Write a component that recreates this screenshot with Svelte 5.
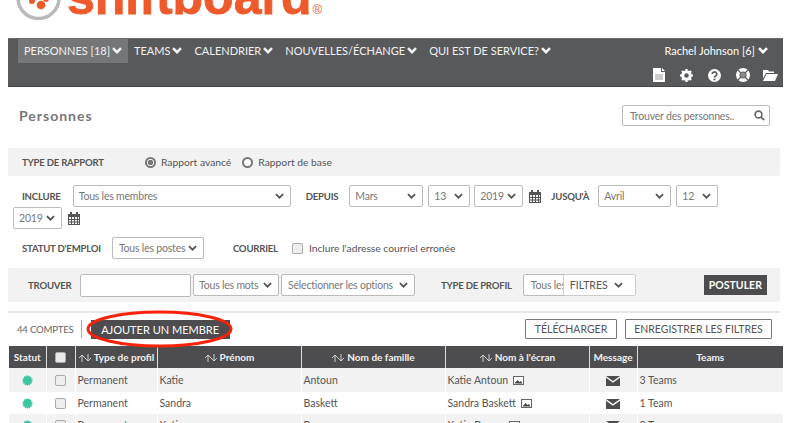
<script>
  const navItems = ['PERSONNES [18]', 'TEAMS', 'CALENDRIER', 'NOUVELLES/ÉCHANGE', 'QUI EST DE SERVICE?'];
  const rows = [
    ['Permanent', 'Katie', 'Antoun', 'Katie Antoun', '3 Teams'],
    ['Permanent', 'Sandra', 'Baskett', 'Sandra Baskett', '1 Team'],
    ['Permanent', 'Katie', 'Brown', 'Katie Brown', '2 Teams']
  ];
</script>

{#snippet chev(size = 9, w = 2.4)}
  <svg class="chev" width={size} height={size * 0.7} viewBox="0 0 10 7"><path d="M1 1.2 5 5.2 9 1.2" fill="none" stroke="currentColor" stroke-width={w}/></svg>
{/snippet}

{#snippet sel(text, cls)}
  <div class="sel {cls}"><span>{text}</span>{@render chev(9, 2)}</div>
{/snippet}

{#snippet cal()}
  <svg class="cal" width="12" height="13" viewBox="0 0 12 13"><path fill="#555" d="M2 0h2v2H2zM8 0h2v2H8zM0 2h12v11H0z"/><path fill="#f4f4f4" d="M1 5h2v2H1zM4 5h2v2H4zM7 5h2v2H7zM10 5h1v2h-1zM1 8h2v1.5H1zM4 8h2v1.5H4zM7 8h2v1.5H7zM10 8h1v1.5h-1zM1 10.5h2V12H1zM4 10.5h2V12H4zM7 10.5h2V12H7zM10 10.5h1V12h-1z"/></svg>
{/snippet}

{#snippet sort()}
  <svg class="sort" width="14" height="8" viewBox="0 0 14 8"><path d="M4 8V1M1 4l3-3 3 3M10 0v7M7 4l3 3 3-3" fill="none" stroke="#ddd" stroke-width=".9"/></svg>
{/snippet}

<div class="page">
  <header class="logo">
    <svg class="mark" width="46" height="22" viewBox="0 0 46 22">
      <circle cx="22.500" cy="-2" r="20.500" fill="none" stroke="#b9b9b9" stroke-width="3.500"/>
      <circle cx="16" cy="1" r="3" fill="#ee5a2c"/>
      <circle cx="25" cy="5" r="4.300" fill="#ee5a2c"/>
      <circle cx="30" cy="-1" r="3" fill="#ee5a2c"/>
    </svg>
    <span class="wordmark">shiftboard</span><span class="reg">®</span>
  </header>

  <nav class="nav">
    <div class="nav-row">
      {#each navItems as item, i}
        <div class="nav-item" class:active={i === 0}>{item}{@render chev(10, 2.6)}</div>
      {/each}
      <div class="user">Rachel Johnson [6]{@render chev(10, 2.6)}</div>
    </div>
    <div class="nav-icons">
      <svg width="12" height="14" viewBox="0 0 12 14"><path fill="#fff" d="M0 0h8v4h4v10H0z"/><path fill="#fff" d="M9 0l3 3H9z"/><path stroke="#999" d="M2 7h8M2 9h8M2 11h8"/></svg>
      <svg width="13" height="13" viewBox="0 0 13 13"><circle cx="6.500" cy="6.500" r="3.800" fill="none" stroke="#fff" stroke-width="3"/><path stroke="#fff" stroke-width="2.200" d="M6.500 0v13M0 6.500h13M2 2l9 9M11 2l-9 9" stroke-dasharray="2.400 8.200 2.400"/></svg>
      <svg width="13" height="13" viewBox="0 0 13 13"><circle cx="6.500" cy="6.500" r="6.500" fill="#fff"/><path d="M4.200 5a2.300 2.200 0 1 1 3.400 2c-.7.4-1.100.7-1.100 1.600" fill="none" stroke="#58595b" stroke-width="1.700"/><path d="M5.500 9.600h2v1.700h-2z" fill="#58595b"/></svg>
      <svg width="14" height="14" viewBox="0 0 14 14"><circle cx="7" cy="7" r="5.300" fill="none" stroke="#fff" stroke-width="3.400"/><circle cx="7" cy="7" r="2.800" fill="#8a8a8c"/><path stroke="#58595b" stroke-width="1.100" d="M2 2l3 3M12 2 9 5M2 12l3-3M12 12 9 9"/></svg>
      <svg class="folder" width="15" height="12" viewBox="0 0 15 12"><path fill="#fff" d="M0 1h5l1 1.500h5V4H3L0 9.500zM3.500 5H15l-3 7H0z"/></svg>
    </div>
  </nav>

  <div class="title-row">
    <h1>Personnes</h1>
    <div class="search"><span>Trouver des personnes..</span>
      <svg width="11" height="11" viewBox="0 0 11 11"><circle cx="4.500" cy="4.500" r="3.400" fill="none" stroke="#666" stroke-width="1.600"/><path d="M7 7l3.200 3.200" stroke="#666" stroke-width="1.800"/></svg>
    </div>
  </div>

  <section class="band report">
    <b class="lbl rep-lbl">TYPE DE RAPPORT</b>
    <span class="radio on"></span><span class="rtext">Rapport avancé</span>
    <span class="radio"></span><span class="rtext">Rapport de base</span>
  </section>

  <section class="line include">
    <b class="lbl">INCLURE</b>
    {@render sel('Tous les membres', 'w-members')}
    <b class="lbl depuis">DEPUIS</b>
    {@render sel('Mars', 'w-month')}
    {@render sel('13', 'w-day')}
    {@render sel('2019', 'w-year')}
    {@render cal()}
    <b class="lbl jusqu">JUSQU'À</b>
    {@render sel('Avril', 'w-month2')}
    {@render sel('12', 'w-day')}
  </section>
  <section class="line second">
    {@render sel('2019', 'w-year')}
    {@render cal()}
  </section>

  <section class="line status">
    <b class="lbl">STATUT D'EMPLOI</b>
    {@render sel('Tous les postes', 'w-status')}
    <b class="lbl courriel">COURRIEL</b>
    <span class="check"></span>
    <span class="rtext">Inclure l'adresse courriel erronée</span>
  </section>

  <section class="band find">
    <b class="lbl find-lbl">TROUVER</b>
    <div class="input"></div>
    {@render sel('Tous les mots', 'w-words')}
    {@render sel('Sélectionner les options', 'w-opts')}
    <b class="lbl profil">TYPE DE PROFIL</b>
    <div class="profile-wrap">
      <div class="sel w-profile"><span>Tous les</span></div>
      <div class="filtres">FILTRES{@render chev(9, 2)}</div>
    </div>
    <button class="apply">POSTULER</button>
  </section>

  <div class="actions">
    <span class="count">44 COMPTES</span>
    <span class="vr"></span>
    <div class="add-wrap">
      <button class="add">AJOUTER UN MEMBRE</button>
      <svg class="ring" width="147" height="40" viewBox="0 0 147 40"><ellipse cx="73.500" cy="20" rx="71.500" ry="17" fill="none" stroke="#f5230b" stroke-width="3"/></svg>
    </div>
    <button class="ghost dl">TÉLÉCHARGER</button>
    <button class="ghost save">ENREGISTRER LES FILTRES</button>
  </div>

  <table>
    <colgroup>
      <col style="width:37px"/><col style="width:29px"/><col style="width:82px"/><col style="width:144px"/><col style="width:144px"/><col style="width:144px"/><col style="width:48px"/><col/>
    </colgroup>
    <thead>
      <tr>
        <th>Statut</th>
        <th><span class="check head"></span></th>
        <th>{@render sort()}Type de profil</th>
        <th>{@render sort()}Prénom</th>
        <th>{@render sort()}Nom de famille</th>
        <th>{@render sort()}Nom à l'écran</th>
        <th>Message</th>
        <th>Teams</th>
      </tr>
    </thead>
    <tbody>
      {#each rows as r}
        <tr>
          <td class="c"><svg class="dot" width="11" height="11" viewBox="0 0 11 11"><circle cx="5.500" cy="5.500" r="4.400" fill="#3cc5a0" stroke="#3cc5a0" stroke-width="1.500" stroke-dasharray="1.100 1"/></svg></td>
          <td class="c"><span class="check"></span></td>
          <td>{r[0]}</td>
          <td>{r[1]}</td>
          <td>{r[2]}</td>
          <td>{r[3]}
            <svg class="pic" width="11" height="9" viewBox="0 0 11 9"><rect x=".5" y=".5" width="10" height="8" fill="#fff" stroke="#666"/><path d="M1.500 7.500 4.500 4l2 2 1.500-1 1.500 2.500z" fill="#444"/></svg>
          </td>
          <td class="c"><svg class="mail" width="14" height="10" viewBox="0 0 14 10"><path fill="#4d4d4f" d="M0 0h14L7 5zM0 1.800l7 5 7-5V10H0z"/></svg></td>
          <td>{r[4]}</td>
        </tr>
      {/each}
    </tbody>
  </table>
</div>

<style>
  :global(body) { margin: 0; background: #fff; overflow: hidden; }
  .page {
    width: 794px; height: 423px; overflow: hidden; box-sizing: border-box;
    font-family: Lato, "Open Sans", sans-serif; font-size: 10.5px; color: #555;
  }
  .logo {
    height: 38px; margin-left: 16px; display: flex; align-items: flex-start; position: relative; overflow: hidden;
  }
  .mark { flex: none; margin-right: 5px; }
  .wordmark {
    font-family: "Liberation Sans", sans-serif; font-weight: 700; font-size: 50px; line-height: 50px;
    margin-top: -28px; color: #ee5a2c; letter-spacing: 0; -webkit-text-stroke: .8px #ee5a2c;
  }
  .reg { color: #ee5a2c; font-size: 13px; line-height: 13px; margin-top: 3px; margin-left: 1px; font-family: "Liberation Sans", sans-serif; }

  .nav {
    margin: 0 11px 0 8px; height: 49px; background: #58595b; color: #fff; box-sizing: border-box;
    border-top: 1px solid #6a6a6a; border-bottom: 1px solid #444;
  }
  .nav-row { display: flex; padding-left: 10px; height: 24px; }
  .nav-item {
    padding: 0 6px 2px; display: flex; align-items: center; gap: 2px; height: 24px;
    font-size: 11px; color: #f2f2f2; white-space: nowrap; box-sizing: border-box;
  }
  .nav-item:first-child { width: 110px; }
  .nav-item.active { background: #757678; }
  .chev { flex: none; }
  .user { margin-left: auto; margin-right: 15px; padding-bottom: 2px; display: flex; align-items: center; gap: 3px; font-size: 11px; }
  .nav-icons { display: flex; justify-content: flex-end; align-items: center; gap: 15px; padding: 4px 5px 0 0; height: 16px; }
  .folder { margin-left: -2px; }

  .title-row { display: flex; justify-content: space-between; align-items: center; margin: 18px 24px 0 19px; height: 21px; }
  h1 { margin: 0; font-size: 14px; font-weight: 700; color: #777; letter-spacing: 1px; }
  .search {
    width: 148px; height: 21px; box-sizing: border-box; border: 1px solid #bbb; border-radius: 2px;
    display: flex; align-items: center; justify-content: space-between; padding: 0 4px 0 7px; color: #777; font-size: 10.500px; letter-spacing: -.2px;
  }

  .band { background: #f2f2f2; border-radius: 2px; margin: 0 14px 0 8px; display: flex; align-items: center; }
  .lbl { font-weight: 700; color: #555; font-size: 9.600px; letter-spacing: -.22px; white-space: nowrap; }
  .report { margin-top: 22px; height: 28px; padding-left: 14px; }
  .rep-lbl { width: 123px; }
  .radio {
    width: 11px; height: 11px; box-sizing: border-box; border: 2px solid #777; border-radius: 50%; margin-right: 5px; background: #fff; flex: none;
  }
  .radio.on { background: radial-gradient(circle, #777 0 2.500px, #fff 3px); margin-right: 5px; }
  .rtext { color: #555; font-size: 10.300px; white-space: nowrap; margin-right: 11px; }

  .line { display: flex; align-items: center; }
  .sel {
    height: 22px; box-sizing: border-box; border: 1px solid #bbb; border-radius: 2px; background: #fff;
    display: flex; align-items: center; justify-content: space-between; padding: 0 6px 0 5px; color: #777; font-size: 10.500px; letter-spacing: -.2px; white-space: nowrap; flex: none;
  }
  .sel .chev { color: #555; }
  .include { margin-top: 9px; height: 22px; padding-left: 22px; }
  .w-members { width: 218px; margin-left: 12px; }
  .depuis { margin-left: 15px; }
  .w-month { width: 74px; margin-left: 11px; }
  .w-day { width: 42px; margin-left: 5px; }
  .w-year { width: 49px; margin-left: 4px; }
  .cal { margin-left: 6px; flex: none; }
  .jusqu { margin-left: 10px; }
  .w-month2 { width: 73px; margin-left: 9px; }
  .second { height: 22px; padding-left: 9px; }
  .status { margin-top: 8px; height: 22px; padding-left: 22px; }
  .w-status { width: 92px; margin-left: 11px; padding-left: 6px; }
  .courriel { margin-left: 29px; margin-right: 14px; }
  .check {
    display: inline-block; width: 11px; height: 11px; box-sizing: border-box; background: #eee; border: 1px solid #aaa; border-radius: 2px; margin-right: 6px; flex: none;
  }
  .find { margin-top: 9px; height: 34px; padding-left: 20px; }
  .find-lbl { width: 52px; }
  .input { width: 111px; height: 23px; box-sizing: border-box; background: #fff; border: 1px solid #bbb; border-radius: 2px; }
  .w-words { width: 86px; margin-left: 2px; padding-left: 5px; }
  .w-opts { width: 134px; margin-left: 2px; padding-left: 6px; }
  .profil { margin-left: 26px; }
  .profile-wrap { position: relative; margin-left: 11px; width: 113px; height: 22px; flex: none; }
  .w-profile { width: 88px; padding-left: 7px; }
  .filtres {
    position: absolute; left: 40px; top: 0; width: 73px; height: 22px; background: #fff; box-sizing: border-box;
    border: 1px solid #ccc; border-radius: 2px; display: flex; align-items: center; gap: 6px; padding-left: 6px; color: #555; font-size: 10.500px;
  }
  .apply {
    margin-left: 68px; width: 63px; height: 20px; background: #4d4d4f; color: #fff; border: 0; padding: 0;
    font: 700 10.500px Lato, sans-serif; flex: none;
  }

  .actions {
    margin: 9px 14px 0 8px; height: 35px; border-top: 2px solid #e6e6e6; box-sizing: border-box; display: flex; align-items: center; padding-left: 9px; padding-bottom: 1px;
  }
  .count { font-size: 9.600px; letter-spacing: -.2px; color: #666; }
  .vr { width: 1px; height: 18px; background: #aaa; margin: 0 8px 0 7px; }
  .add-wrap { position: relative; }
  .add {
    display: block; width: 139px; height: 19px; background: #4d4d4f; color: #fff; border: 0; padding: 0; font: 400 11px Lato, sans-serif; margin-left: 1px;
  }
  .ring { position: absolute; left: -4px; top: -11px; }
  .ghost {
    height: 20px; background: #fff; border: 1px solid #777; color: #555; padding: 0; font: 400 10.500px Lato, sans-serif; border-radius: 1px; flex: none;
  }
  .dl { width: 92px; margin-left: auto; }
  .save { width: 147px; margin-left: 8px; margin-right: 8px; }

  table {
    width: 774px; margin-left: 9px; border-collapse: collapse; table-layout: fixed; font-size: 10.500px;
  }
  th {
    background: #4d4d4f; color: #f2f2f2; font-weight: 700; height: 22px; padding: 0; text-align: center;
    border-left: 1px solid #ddd; white-space: nowrap; font-size: 10px;
  }
  th:first-child { border-left: 0; }
  td { height: 22px; padding: 0 0 0 2px; border-left: 1px solid #fff; color: #555; white-space: nowrap; }
  td:first-child { border-left: 0; }
  tbody tr:first-child td { height: 24px; }
  td.c { text-align: center; padding: 0; }
  td .check { margin: 0; vertical-align: middle; }
  th .check.head { margin: 0; background: #e8e8e8; vertical-align: middle; }
  tbody tr:nth-child(odd) td { background: #f2f2f2; }
  .sort { margin-right: 2px; vertical-align: -1px; }
  .dot, .mail { vertical-align: middle; }
  .pic { margin-left: 2px; vertical-align: -1px; }
</style>
